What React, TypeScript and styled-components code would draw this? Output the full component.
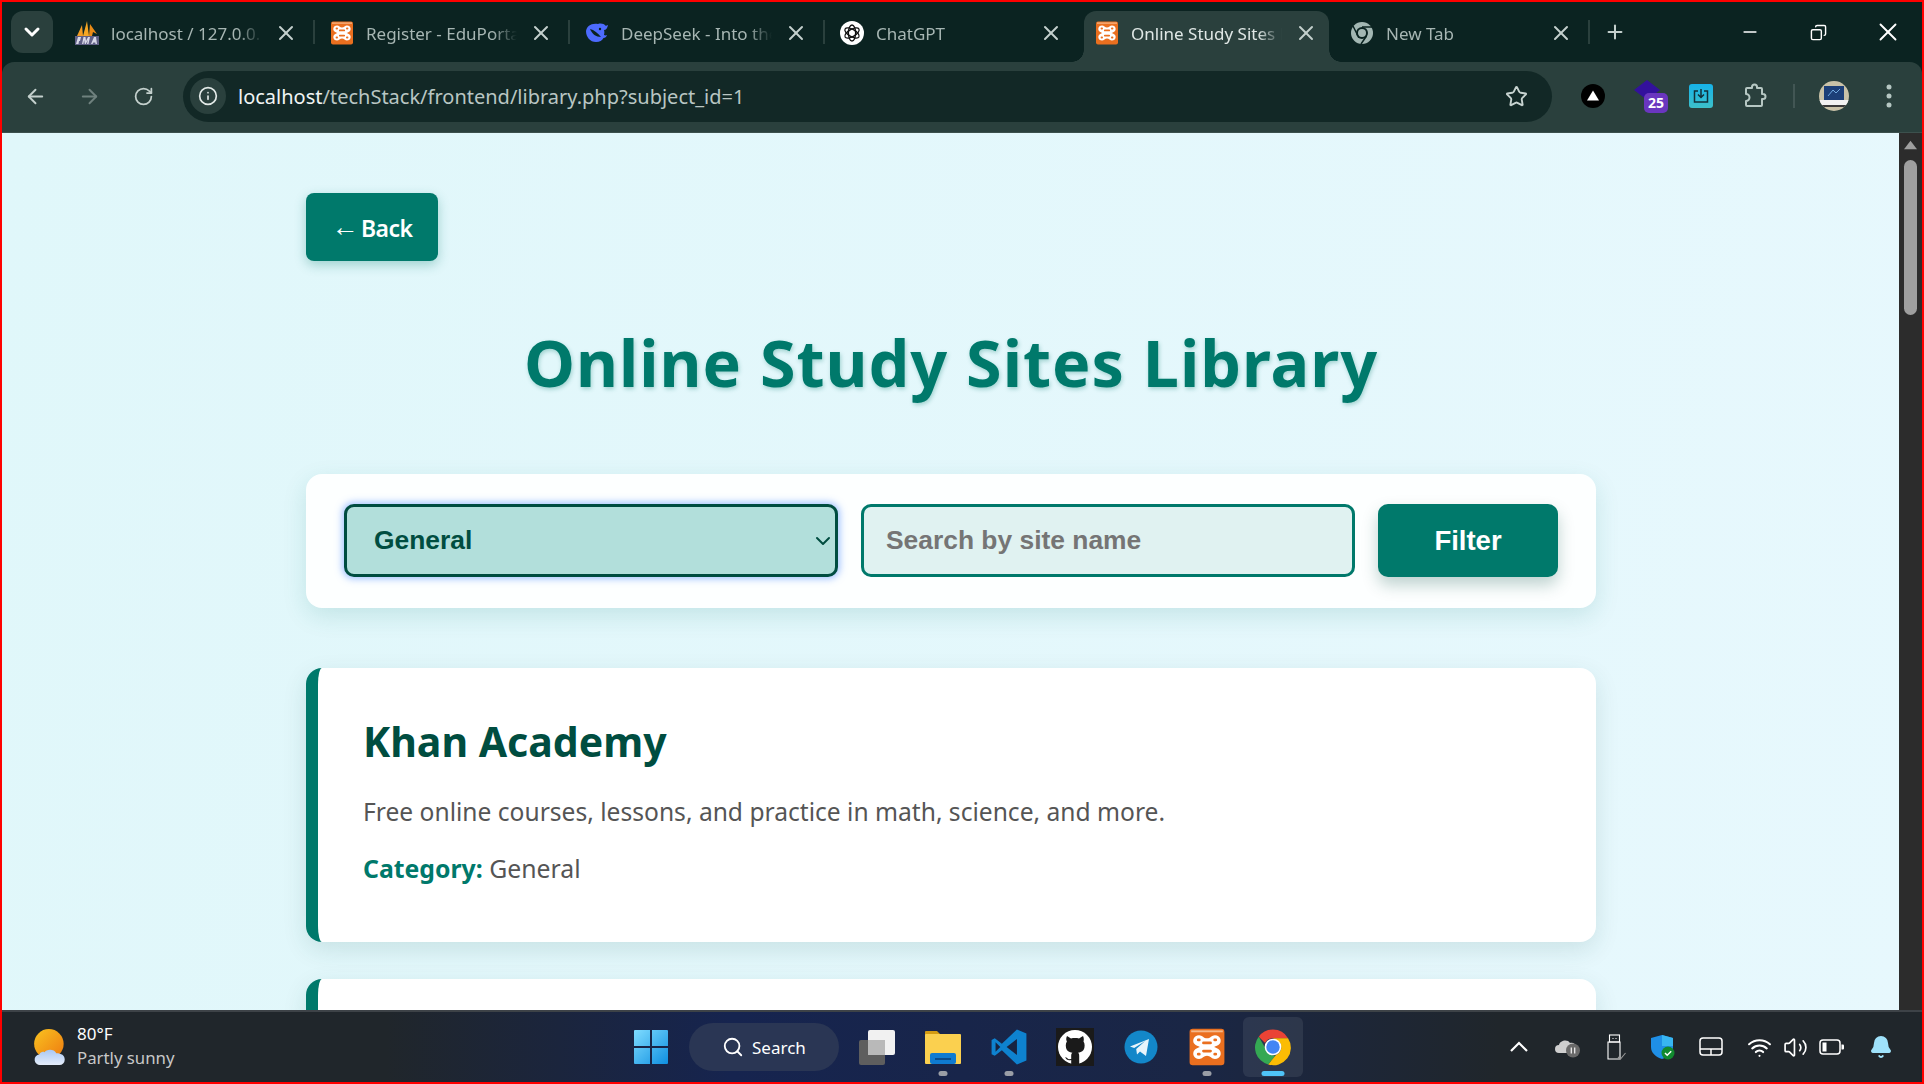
import React from 'react'
import styled, { createGlobalStyle } from 'styled-components'
import { ArrowLeft, ArrowRight, RotateCw, Info, Star, ChevronDown, X, Plus, Minus, Search, Wifi, Volume2, Bell, Copy } from 'lucide-react'

const GlobalStyle = createGlobalStyle`
  html, body {
    margin: 0;
    height: 100%;
    overflow: hidden;
    background: #ff0000;
  }
  * { box-sizing: border-box; }
`

const XamppIcon = ({ size = 24 }: { size?: number }) => (
  <svg width={size} height={size} viewBox="0 0 24 24">
    <rect x="1" y="0.5" width="22" height="23" rx="2" fill="#ea6f1f" />
    <rect x="2" y="1.5" width="20" height="1.2" fill="#f6b98a" />
    <path
      d="M7 4.500C9 4.500 10 6.500 12 6.500S15 4.500 17 4.500C20.500 4.500 21.500 8 20 10 19 11.200 17.500 11.500 16.500 12 17.500 12.500 19 12.800 20 14 21.500 16 20.500 19.500 17 19.500 15 19.500 14 17.500 12 17.500S9 19.500 7 19.500C3.500 19.500 2.500 16 4 14 5 12.800 6.500 12.500 7.500 12 6.500 11.500 5 11.200 4 10 2.500 8 3.500 4.500 7 4.500Z"
      fill="#fff"
    />
    <path d="M9.800 9.400h4.400M9.800 14.600h4.400" stroke="#ea6f1f" strokeWidth="1.800" strokeLinecap="round" />
    <path d="M6.500 7.500h.6M16.900 7.500h.6M6.500 16.500h.6M16.900 16.500h.6" stroke="#ea6f1f" strokeWidth="1.800" strokeLinecap="round" />
  </svg>
)

const PmaIcon = () => (
  <svg width="24" height="24" viewBox="0 0 24 24">
    <path d="M2 15 7 4l1 11z" fill="#f29b24" />
    <path d="M8 15 12 0l2 15z" fill="#f5a623" />
    <path d="M14 15 15 3l7 10-4-2-1 4z" fill="#ea8a16" />
    <rect x="0" y="15" width="24" height="9" fill="#5f5f85" />
    <path d="M1 23l2-7h3l-1 4H4l-.5 3zm6 0 1.500-7h2l.5 4 2-4h2l-1.500 7H12l.8-4-2 4h-1l-.6-4-.8 4zm9 0 3-7h2l1 7h-1.500l-.2-1.500h-2l-.8 1.500z" fill="#d9d9e8" />
  </svg>
)

const WhaleIcon = () => (
  <svg width="24" height="22" viewBox="0 0 24 22">
    <path d="M23 3c-1 .6-1.600.6-2.400.8C19 1.800 16 1 13 2 6 1 2 4 1 9c0 6 4 11 10 11 4 0 6-1.500 7.500-4 1.500 0 3-1 3.500-3-1 .5-2 .5-3 0 .5-2 .5-3.500 0-5 2 0 3.500-2 4-5z" fill="#4d6bfe" />
    <path d="M5 7c2 5 6 8 11 8-3-4-7-7-11-8z" fill="#0b2321" />
    <circle cx="15" cy="7" r="1.200" fill="#0b2321" />
  </svg>
)

const GptIcon = () => (
  <svg width="24" height="24" viewBox="0 0 24 24">
    <circle cx="12" cy="12" r="12" fill="#fff" />
    <g fill="none" stroke="#111" strokeWidth="1.300">
      <ellipse cx="12" cy="12" rx="3.600" ry="8" />
      <ellipse cx="12" cy="12" rx="3.600" ry="8" transform="rotate(60 12 12)" />
      <ellipse cx="12" cy="12" rx="3.600" ry="8" transform="rotate(120 12 12)" />
    </g>
  </svg>
)

const ChromeMono = () => (
  <svg width="24" height="24" viewBox="0 0 24 24">
    <circle cx="12" cy="12" r="11" fill="#a3b7b3" />
    <circle cx="12" cy="12" r="6" fill="#0b2321" />
    <circle cx="12" cy="12" r="4" fill="#a3b7b3" />
    <path d="M12 6h10M8 15 3 5M16.500 15 11 23" stroke="#0b2321" strokeWidth="1.500" />
  </svg>
)

const ChromeIcon = () => (
  <svg width="38" height="38" viewBox="0 0 48 48">
    <path d="M24 2a22 22 0 0 1 19 11H24a11 11 0 0 0-10 6L6 11A22 22 0 0 1 24 2z" fill="#ea4335" />
    <path d="M6 11l9.500 16.500A11 11 0 0 0 27 34.600L18 46A22 22 0 0 1 6 11z" fill="#34a853" />
    <path d="M43 13a22 22 0 0 1-25 33l9.500-11.500A11 11 0 0 0 33 19l-9-6z" fill="#fbbc04" />
    <circle cx="24" cy="24" r="10.500" fill="#fff" />
    <circle cx="24" cy="24" r="8.500" fill="#4285f4" />
  </svg>
)

const WindowsLogo = () => (
  <svg width="36" height="36" viewBox="0 0 36 36">
    <defs>
      <linearGradient id="win" x1="0" y1="0" x2="1" y2="1">
        <stop offset="0" stopColor="#7fdcff" />
        <stop offset="1" stopColor="#0f8fe0" />
      </linearGradient>
    </defs>
    <path d="M1 2a1 1 0 0 1 1-1h15v16H1zM19 1h15a1 1 0 0 1 1 1v15H19zM1 19h16v16H2a1 1 0 0 1-1-1zM19 19h16v15a1 1 0 0 1-1 1H19z" fill="url(#win)" />
  </svg>
)

const TaskView = () => (
  <svg width="38" height="36" viewBox="0 0 38 36">
    <rect x="1" y="11" width="26" height="25" rx="2" fill="#5e5e5e" />
    <rect x="10" y="1" width="27" height="25" rx="2" fill="#f1f1f1" />
    <rect x="10" y="11" width="17" height="15" fill="#b9b9b9" />
  </svg>
)

const FolderIcon = () => (
  <svg width="38" height="36" viewBox="0 0 38 36">
    <path d="M1 3a1 1 0 0 1 1-1h11l4 4H1z" fill="#d49b12" />
    <rect x="1" y="5" width="36" height="30" rx="1" fill="#fbd04f" />
    <rect x="6" y="24" width="26" height="11" rx="2" fill="#0f7bd1" />
    <rect x="11" y="29" width="16" height="2" fill="#0a4c8c" />
  </svg>
)

const VsCodeIcon = () => (
  <svg width="38" height="38" viewBox="0 0 24 24">
    <path d="M17 1 7.500 10 3 6.500 1 7.500v9l2 1 4.500-3.500L17 23l6-2.500v-17z" fill="#0e82cf" />
    <path d="M17 7v10l-6.500-5z" fill="#172340" />
    <path d="M3.500 9v6l3-3z" fill="#172340" />
  </svg>
)

const GithubIcon = () => (
  <svg width="38" height="38" viewBox="0 0 38 38">
    <rect width="38" height="38" fill="#1a1a1a" />
    <circle cx="19" cy="19" r="17" fill="#fff" />
    <path d="M11 8l4 2.500c2.500-.6 5.500-.6 8 0L27 8c1 2 1 4 .5 5.500 1.500 2 1.500 6 0 8.500-1.500 2-4 2.500-5.500 2.800 1 .7 1.200 1.700 1.200 3V36h-8v-4c-3 .8-5-.2-6-3 1.500.5 2.500 1.500 3.500 2.300l2.500-.3V27.800c0-1.300.3-2.300 1.200-3-1.500-.3-4-.8-5.500-2.800-1.500-2.500-1.500-6.500 0-8.500C10 12 10 10 11 8z" fill="#1a1a1a" />
  </svg>
)

const TelegramIcon = () => (
  <svg width="36" height="36" viewBox="0 0 36 36">
    <circle cx="18" cy="18" r="16.500" fill="#1387c9" />
    <path d="M7 17.500 26 10l-3 17-6-4.500-3 3-.8-5.500 9-8-11 7z" fill="#e8f4fb" />
  </svg>
)

const ExtensionTriangle = () => (
  <svg width="24" height="24" viewBox="0 0 24 24">
    <circle cx="12" cy="12" r="12" fill="#000" />
    <path d="M12 6.500 18 16.500H6z" fill="#fff" />
  </svg>
)

const PuzzleOutline = () => (
  <svg width="26" height="26" viewBox="0 0 26 26" fill="none" stroke="#b6c7c3" strokeWidth="2" strokeLinejoin="round">
    <path d="M5 5h5V4a2.500 2.500 0 0 1 5 0v1h4a1 1 0 0 1 1 1v5h1a2.500 2.500 0 0 1 0 5h-1v6a1 1 0 0 1-1 1H5a1 1 0 0 1-1-1v-4a3.500 3.500 0 0 0 0-7V6a1 1 0 0 1 1-1z" />
  </svg>
)

const KebabIcon = () => (
  <svg width="24" height="24" viewBox="0 0 24 24" fill="#b6c7c3">
    <circle cx="12" cy="3" r="2.500" />
    <circle cx="12" cy="12" r="2.500" />
    <circle cx="12" cy="21" r="2.500" />
  </svg>
)

const AvatarPhoto = () => (
  <svg width="30" height="30" viewBox="0 0 30 30">
    <rect width="30" height="30" fill="#c9c2a8" />
    <rect x="5" y="5" width="20" height="14" fill="#1c3f78" />
    <path d="M9 15l5-6 3 3 4-4" stroke="#6fa8e0" fill="none" />
    <rect y="19" width="30" height="5" fill="#f2f2f2" />
    <rect y="24" width="30" height="2" fill="#3a3a3a" />
  </svg>
)

const WeatherIcon = () => (
  <svg width="36" height="38" viewBox="0 0 34 36">
    <defs>
      <linearGradient id="sun" x1="0" y1="0" x2="1" y2="1">
        <stop offset="0" stopColor="#f9c320" />
        <stop offset="1" stopColor="#ee7a10" />
      </linearGradient>
      <linearGradient id="cloud" x1="0" y1="0" x2="0" y2="1">
        <stop offset="0" stopColor="#a9c8f5" />
        <stop offset="1" stopColor="#e4ecfa" />
      </linearGradient>
    </defs>
    <circle cx="15" cy="15" r="14" fill="url(#sun)" />
    <path d="M7 35a5 5 0 0 1-1-10c1-2 3-3 5-2 1-3 9-4 11 1 5 0 8 2 8 6a5 5 0 0 1-5 5z" fill="url(#cloud)" />
  </svg>
)

const TrayChevron = () => (
  <svg width="24" height="24" viewBox="0 0 24 24" fill="none" stroke="#fff" strokeWidth="2.200">
    <path d="M4 16 12 8l8 8" />
  </svg>
)

const CloudPaused = () => (
  <svg width="26" height="22" viewBox="0 0 26 22">
    <path d="M4 17a4 4 0 0 1 0-8c1-5 9-6 11-2 3-1 6 1 6 4v6z" fill="#cfcfcf" />
    <circle cx="18" cy="14.500" r="7" fill="#6a6a6a" />
    <path d="M16.300 11.500v6M19.700 11.500v6" stroke="#eee" strokeWidth="1.300" />
  </svg>
)

const UsbIcon = () => (
  <svg width="22" height="26" viewBox="-2 0 22 26" fill="none" stroke="#fff" strokeWidth="1.100">
    <rect x="2.500" y="1" width="10" height="7" />
    <path d="M1 8h12v17H1z" />
    <path d="M11 23l2.500 2 5-6" stroke="#999" />
    <path d="M5.500 4.500h1M8.500 4.500h1" />
  </svg>
)

const DefenderIcon = () => (
  <svg width="24" height="26" viewBox="0 0 24 26">
    <path d="M11 1 22 4v9c0 6-5 10-11 12C5 23 0 19 0 13V4z" fill="#1f8fe6" />
    <path d="M11 1 22 4v8H11z" fill="#38b6f2" />
    <circle cx="17" cy="19" r="6.500" fill="#118a2e" />
    <path d="M14 19l2.200 2.200 4-4" stroke="#fff" strokeWidth="1.500" fill="none" />
  </svg>
)

const TrayPad = () => (
  <svg width="24" height="20" viewBox="0 0 24 20" fill="none" stroke="#fff" strokeWidth="1.500">
    <rect x="1" y="1" width="22" height="17" rx="3" />
    <path d="M1 12h22M12 12v6" />
  </svg>
)

const BatteryIcon = () => (
  <svg width="26" height="18" viewBox="0 0 26 18" fill="none">
    <rect x="1" y="2" width="20" height="14" rx="3" stroke="#fff" strokeWidth="1.500" />
    <rect x="3.500" y="4.500" width="4" height="9" fill="#fff" />
    <path d="M22.500 6.500h1.500a1 1 0 0 1 1 1v3a1 1 0 0 1-1 1h-1.500z" fill="#fff" />
  </svg>
)

const tabs = [
  { title: 'localhost / 127.0.0.1', icon: <PmaIcon /> },
  { title: 'Register - EduPortal', icon: <XamppIcon /> },
  { title: 'DeepSeek - Into the Unknown', icon: <WhaleIcon /> },
  { title: 'ChatGPT', icon: <GptIcon /> },
  { title: 'Online Study Sites Library', icon: <XamppIcon />, active: true },
  { title: 'New Tab', icon: <ChromeMono /> },
]

export default function App() {
  return (
    <S.Screen>
      <GlobalStyle />
      <S.BrowserTop>
        <S.TitleBar>
          <S.TabSearch><ChevronDown size={24} strokeWidth={3} color="#fff" /></S.TabSearch>
          <S.Tabs>
            {tabs.map((tab, i) => (
              <React.Fragment key={tab.title}>
                <S.Tab $active={tab.active}>
                  {tab.icon}
                  <S.TabTitle>{tab.title}</S.TabTitle>
                  <S.TabClose><X size={24} strokeWidth={2} /></S.TabClose>
                </S.Tab>
                <S.TabDivider $hidden={i === 3 || i === 4} />
              </React.Fragment>
            ))}
            <S.NewTab><Plus size={22} strokeWidth={2.2} /></S.NewTab>
          </S.Tabs>
          <S.WindowControls>
            <Minus size={20} strokeWidth={2} />
            <S.RestoreIcon><Copy size={17} strokeWidth={2} /></S.RestoreIcon>
            <X size={30} strokeWidth={1.5} />
          </S.WindowControls>
        </S.TitleBar>

        <S.Toolbar>
          <S.NavButton><ArrowLeft size={23} /></S.NavButton>
          <S.NavButton $muted><ArrowRight size={23} /></S.NavButton>
          <S.NavButton><RotateCw size={21} /></S.NavButton>
          <S.Omnibox>
            <S.InfoChip><Info size={20} /></S.InfoChip>
            <S.Url>localhost<span>/techStack/frontend/library.php?subject_id=1</span></S.Url>
            <Star size={23} color="#c7d3d0" strokeWidth={2} />
          </S.Omnibox>
          <S.Extensions>
            <ExtensionTriangle />
            <S.ToolSlot $left={29}>
              <S.StackedExt>
                <svg width="26" height="26" viewBox="0 0 26 26"><path d="M13 0 26 10 13 20 0 10z" fill="#33119c" /></svg>
                <S.ExtBadge>25</S.ExtBadge>
              </S.StackedExt>
            </S.ToolSlot>
            <S.ToolSlot $left={21}>
              <S.SaveExt>
                <svg width="18" height="18" viewBox="0 0 18 18" fill="none" stroke="#12303a" strokeWidth="1.500"><path d="M6 4H2.500v11h13V4H12M9 2v8M6 7.500l3 3 3-3" /></svg>
              </S.SaveExt>
            </S.ToolSlot>
            <S.ToolSlot $left={29}><PuzzleOutline /></S.ToolSlot>
            <S.ToolSlot $left={25}><S.ToolDivider /></S.ToolSlot>
            <S.ToolSlot $left={24}><S.Avatar><AvatarPhoto /></S.Avatar></S.ToolSlot>
            <S.ToolSlot $left={28}><KebabIcon /></S.ToolSlot>
          </S.Extensions>
        </S.Toolbar>
      </S.BrowserTop>

      <S.Viewport>
        <S.Page>
          <S.BackButton><S.BackArrow>←</S.BackArrow> Back</S.BackButton>
          <S.Heading>Online Study Sites Library</S.Heading>
          <S.FilterForm>
            <S.SelectBox>
              General
              <S.SelectChevron><ChevronDown size={24} strokeWidth={2} /></S.SelectChevron>
            </S.SelectBox>
            <S.SearchField>Search by site name</S.SearchField>
            <S.FilterButton>Filter</S.FilterButton>
          </S.FilterForm>
          <S.SiteCard>
            <S.SiteName>Khan Academy</S.SiteName>
            <S.SiteDescription>Free online courses, lessons, and practice in math, science, and more.</S.SiteDescription>
            <S.SiteCategory><strong>Category:</strong> General</S.SiteCategory>
          </S.SiteCard>
          <S.SiteCard />
        </S.Page>
        <S.Scrollbar>
          <S.ScrollArrow>
            <svg width="15" height="10" viewBox="0 0 15 10"><path d="M7.500 0 15 10H0z" fill="#9f9f9f" /></svg>
          </S.ScrollArrow>
          <S.ScrollThumb />
        </S.Scrollbar>
      </S.Viewport>

      <S.Taskbar>
        <S.Weather>
          <WeatherIcon />
          <S.WeatherText>
            <S.Temp>80°F</S.Temp>
            <S.Forecast>Partly sunny</S.Forecast>
          </S.WeatherText>
        </S.Weather>
        <S.TaskIcons>
          <S.TaskItem><WindowsLogo /></S.TaskItem>
          <S.SearchPill><Search size={22} strokeWidth={2} />Search</S.SearchPill>
          <S.TaskItem><TaskView /></S.TaskItem>
          <S.TaskItem $dot><FolderIcon /></S.TaskItem>
          <S.TaskItem $dot><VsCodeIcon /></S.TaskItem>
          <S.TaskItem><GithubIcon /></S.TaskItem>
          <S.TaskItem><TelegramIcon /></S.TaskItem>
          <S.TaskItem $dot><XamppIcon size={38} /></S.TaskItem>
          <S.TaskItem $active><ChromeIcon /></S.TaskItem>
        </S.TaskIcons>
        <S.Tray>
          <TrayChevron />
          <CloudPaused />
          <UsbIcon />
          <DefenderIcon />
          <TrayPad />
          <S.TrayGroup>
            <Wifi size={25} color="#fff" strokeWidth={2} />
            <Volume2 size={25} color="#fff" strokeWidth={1.6} />
            <BatteryIcon />
          </S.TrayGroup>
          <Bell size={24} color="#9fe2fb" fill="#9fe2fb" />
        </S.Tray>
      </S.Taskbar>
    </S.Screen>
  )
}

const uiFont = `'Noto Sans', 'Open Sans', sans-serif`
const formFont = `'Liberation Sans', Arial, sans-serif`

const S = {
  Screen: styled.div`
    width: 1924px;
    height: 1084px;
    padding: 2px;
    display: flex;
    flex-direction: column;
    background: #ff0000;
    overflow: hidden;
    font-family: ${uiFont};
  `,
  BrowserTop: styled.header`
    flex: none;
    background: #0b2321;
  `,
  TitleBar: styled.div`
    height: 60px;
    display: flex;
    align-items: flex-end;
    padding-left: 9px;
  `,
  TabSearch: styled.div`
    width: 42px;
    height: 42px;
    margin-bottom: 9px;
    flex: none;
    border-radius: 12px;
    background: #2a403d;
    display: flex;
    align-items: center;
    justify-content: center;
  `,
  Tabs: styled.div`
    flex: 1;
    display: flex;
    align-items: flex-end;
    height: 100%;
    margin-left: 11px;
  `,
  Tab: styled.div<{ $active?: boolean }>`
    position: relative;
    width: 245px;
    height: 51px;
    flex: none;
    padding: 0 11px 7px 11px;
    display: flex;
    align-items: center;
    gap: 12px;
    border-radius: 12px 12px 0 0;
    background: ${p => (p.$active ? '#2a403d' : 'transparent')};
    color: ${p => (p.$active ? '#dfe7e5' : '#a7b6b3')};
    &::before, &::after {
      content: '';
      display: ${p => (p.$active ? 'block' : 'none')};
      position: absolute;
      bottom: 0;
      width: 12px;
      height: 12px;
    }
    &::before {
      left: -12px;
      background: radial-gradient(circle at 0 0, transparent 11.5px, #2a403d 12px);
    }
    &::after {
      right: -12px;
      background: radial-gradient(circle at 100% 0, transparent 11.5px, #2a403d 12px);
    }
  `,
  TabTitle: styled.span`
    flex: 1;
    min-width: 0;
    overflow: hidden;
    white-space: nowrap;
    font-size: 17px;
    -webkit-mask-image: linear-gradient(to right, #000 84%, transparent 100%);
    mask-image: linear-gradient(to right, #000 84%, transparent 100%);
  `,
  TabClose: styled.span`
    display: flex;
    flex: none;
    color: #c4d0cd;
  `,
  TabDivider: styled.div<{ $hidden?: boolean }>`
    width: 2px;
    height: 24px;
    margin: 0 4px 18px;
    flex: none;
    background: ${p => (p.$hidden ? 'transparent' : '#2a403d')};
  `,
  NewTab: styled.div`
    margin: 0 0 19px 10px;
    display: flex;
    color: #c4d0cd;
  `,
  WindowControls: styled.div`
    width: 207px;
    height: 100%;
    flex: none;
    display: grid;
    grid-template-columns: repeat(3, 1fr);
    align-items: center;
    justify-items: center;
    color: #fff;
  `,
  RestoreIcon: styled.span`
    display: flex;
    transform: scaleX(-1);
  `,
  Toolbar: styled.div`
    height: 71px;
    display: flex;
    align-items: center;
    background: #2a403d;
    border-radius: 12px 12px 0 0;
    border-bottom: 1px solid #3c504d;
    padding: 0 0 2px 6px;
  `,
  NavButton: styled.div<{ $muted?: boolean }>`
    width: 54px;
    display: flex;
    justify-content: center;
    color: ${p => (p.$muted ? '#6f817e' : '#c4d0cd')};
  `,
  Omnibox: styled.div`
    width: 1369px;
    height: 51px;
    margin-left: 13px;
    padding: 0 24px 0 7px;
    display: flex;
    align-items: center;
    border-radius: 26px;
    background: #122826;
  `,
  InfoChip: styled.div`
    width: 36px;
    height: 36px;
    flex: none;
    border-radius: 50%;
    background: #2a403d;
    color: #e3eae8;
    display: flex;
    align-items: center;
    justify-content: center;
  `,
  Url: styled.div`
    flex: 1;
    margin-left: 12px;
    font-size: 20px;
    color: #f0f4f3;
    span { color: #b9c6c3; }
  `,
  Extensions: styled.div`
    flex: 1;
    height: 100%;
    padding-left: 29px;
    display: flex;
    align-items: center;
  `,
  ToolSlot: styled.div<{ $left: number }>`
    margin-left: ${p => p.$left}px;
    display: flex;
    align-items: center;
  `,
  StackedExt: styled.div`
    position: relative;
    width: 34px;
    height: 32px;
  `,
  ExtBadge: styled.span`
    position: absolute;
    right: 0;
    bottom: -1px;
    width: 24px;
    height: 20px;
    border-radius: 5px;
    background: #6a36bf;
    color: #fff;
    font-size: 14px;
    font-weight: 700;
    line-height: 20px;
    text-align: center;
  `,
  SaveExt: styled.div`
    width: 24px;
    height: 24px;
    border-radius: 3px;
    background: linear-gradient(#16b3ea, #3dc0c9);
    display: flex;
    align-items: center;
    justify-content: center;
  `,
  ToolDivider: styled.div`
    width: 2px;
    height: 24px;
    background: #425654;
  `,
  Avatar: styled.div`
    width: 30px;
    height: 30px;
    border-radius: 50%;
    overflow: hidden;
    display: flex;
  `,
  Viewport: styled.div`
    flex: 1;
    min-height: 0;
    display: flex;
    background: linear-gradient(100deg, #e0f7fa, #e7f8fd);
    overflow: hidden;
  `,
  Page: styled.main`
    flex: 1;
    min-width: 0;
    padding: 60px 303px 0 304px;
  `,
  BackButton: styled.div`
    width: 132px;
    height: 68px;
    padding-top: 1px;
    display: flex;
    align-items: center;
    justify-content: center;
    gap: 3px;
    border-radius: 8px;
    background: #00796b;
    box-shadow: 0 4px 12px rgba(0, 121, 107, 0.3);
    color: #fff;
    font-size: 23px;
    font-weight: 600;
    letter-spacing: -0.5px;
  `,
  BackArrow: styled.span`
    font-family: ${formFont};
    font-size: 27px;
    font-weight: 400;
  `,
  Heading: styled.h1`
    margin: 56px 0 66px;
    height: 91px;
    text-align: center;
    color: #00796b;
    font-size: 64.6px;
    line-height: 91px;
    font-weight: 700;
    letter-spacing: 1px;
    text-shadow: 1px 2px 4px rgba(0, 121, 107, 0.3);
  `,
  FilterForm: styled.div`
    height: 134px;
    padding: 30px 38px;
    display: flex;
    gap: 23px;
    border-radius: 16px;
    background: #fdffff;
    box-shadow: 0 8px 24px rgba(0, 121, 107, 0.14);
  `,
  SelectBox: styled.div`
    position: relative;
    width: 494px;
    flex: none;
    height: 73px;
    padding-left: 27px;
    display: flex;
    align-items: center;
    border: 3px solid #004d40;
    border-radius: 10px;
    background: #b2dfdb;
    box-shadow: 0 0 7px 2px rgba(80, 140, 255, 0.5);
    color: #004d40;
    font-family: ${formFont};
    font-size: 26.4px;
    font-weight: 700;
  `,
  SelectChevron: styled.span`
    position: absolute;
    right: 0;
    top: 50%;
    display: flex;
    transform: translateY(-50%);
  `,
  SearchField: styled.div`
    width: 494px;
    flex: none;
    height: 73px;
    padding-left: 22px;
    display: flex;
    align-items: center;
    border: 3px solid #00796b;
    border-radius: 10px;
    background: #e0f2f1;
    color: #757575;
    font-family: ${formFont};
    font-size: 26.4px;
    font-weight: 700;
  `,
  FilterButton: styled.div`
    width: 180px;
    height: 73px;
    flex: none;
    display: flex;
    align-items: center;
    justify-content: center;
    border-radius: 10px;
    background: #00796b;
    box-shadow: 0 8px 16px rgba(0, 77, 64, 0.25);
    color: #fff;
    font-family: ${formFont};
    font-size: 27.5px;
    font-weight: 700;
  `,
  SiteCard: styled.article`
    height: 274px;
    margin-top: 60px;
    padding: 45px 45px;
    border-left: 12px solid #00796b;
    border-radius: 16px;
    background: #fff;
    box-shadow: 0 8px 24px rgba(0, 77, 64, 0.12);
    & + & { margin-top: 37px; }
  `,
  SiteName: styled.h2`
    margin: 0;
    color: #004d40;
    font-size: 41px;
    line-height: 56px;
    font-weight: 700;
  `,
  SiteDescription: styled.p`
    margin: 25px 0 0;
    color: #555;
    font-size: 24.6px;
    line-height: 36px;
  `,
  SiteCategory: styled.p`
    margin: 20px 0 0;
    color: #555;
    font-size: 24.8px;
    line-height: 36px;
    strong { color: #00796b; }
  `,
  Scrollbar: styled.aside`
    width: 23px;
    flex: none;
    background: #2c2c2c;
    padding: 7px 5px 0;
  `,
  ScrollArrow: styled.div`
    height: 10px;
    display: flex;
    justify-content: center;
  `,
  ScrollThumb: styled.div`
    height: 155px;
    margin-top: 10px;
    border-radius: 7px;
    background: #9f9f9f;
  `,
  Taskbar: styled.footer`
    height: 72px;
    flex: none;
    display: grid;
    grid-template-columns: 1fr auto 1fr;
    align-items: center;
    border-top: 2px solid #3d4247;
    background: linear-gradient(90deg, #20262b 0 20%, #16244f 38%, #1a2645 62%, #20262b 78%);
  `,
  Weather: styled.div`
    display: flex;
    align-items: center;
    gap: 8px;
    padding-left: 31px;
  `,
  WeatherText: styled.div`
    display: flex;
    flex-direction: column;
    padding-bottom: 2px;
  `,
  Temp: styled.span`
    color: #fff;
    font-size: 17px;
    line-height: 24px;
  `,
  Forecast: styled.span`
    color: #c8c8c8;
    font-size: 16.8px;
    line-height: 24px;
  `,
  TaskIcons: styled.div`
    display: flex;
    align-items: center;
    gap: 10px;
  `,
  TaskItem: styled.div<{ $dot?: boolean; $active?: boolean }>`
    position: relative;
    width: ${p => (p.$active ? '60px' : '56px')};
    margin: ${p => (p.$active ? '0 -2px' : '0')};
    height: 60px;
    display: flex;
    align-items: center;
    justify-content: center;
    border-radius: 6px;
    background: ${p => (p.$active ? 'rgba(255, 255, 255, 0.08)' : 'transparent')};
    &::after {
      content: '';
      display: ${p => (p.$dot || p.$active ? 'block' : 'none')};
      position: absolute;
      bottom: 1px;
      left: 50%;
      width: ${p => (p.$active ? '23px' : '9px')};
      height: 5px;
      border-radius: 3px;
      transform: translateX(-50%);
      background: ${p => (p.$active ? '#4fc3f7' : '#9a9ea6')};
    }
  `,
  SearchPill: styled.div`
    width: 150px;
    height: 48px;
    padding-left: 33px;
    display: flex;
    align-items: center;
    gap: 8px;
    border-radius: 24px;
    background: #2a3654;
    color: #fff;
    font-size: 17px;
  `,
  Tray: styled.div`
    display: flex;
    align-items: center;
    justify-content: flex-end;
    gap: 24px;
    padding-right: 29px;
  `,
  TrayGroup: styled.div`
    display: flex;
    align-items: center;
    gap: 11px;
  `,
}
